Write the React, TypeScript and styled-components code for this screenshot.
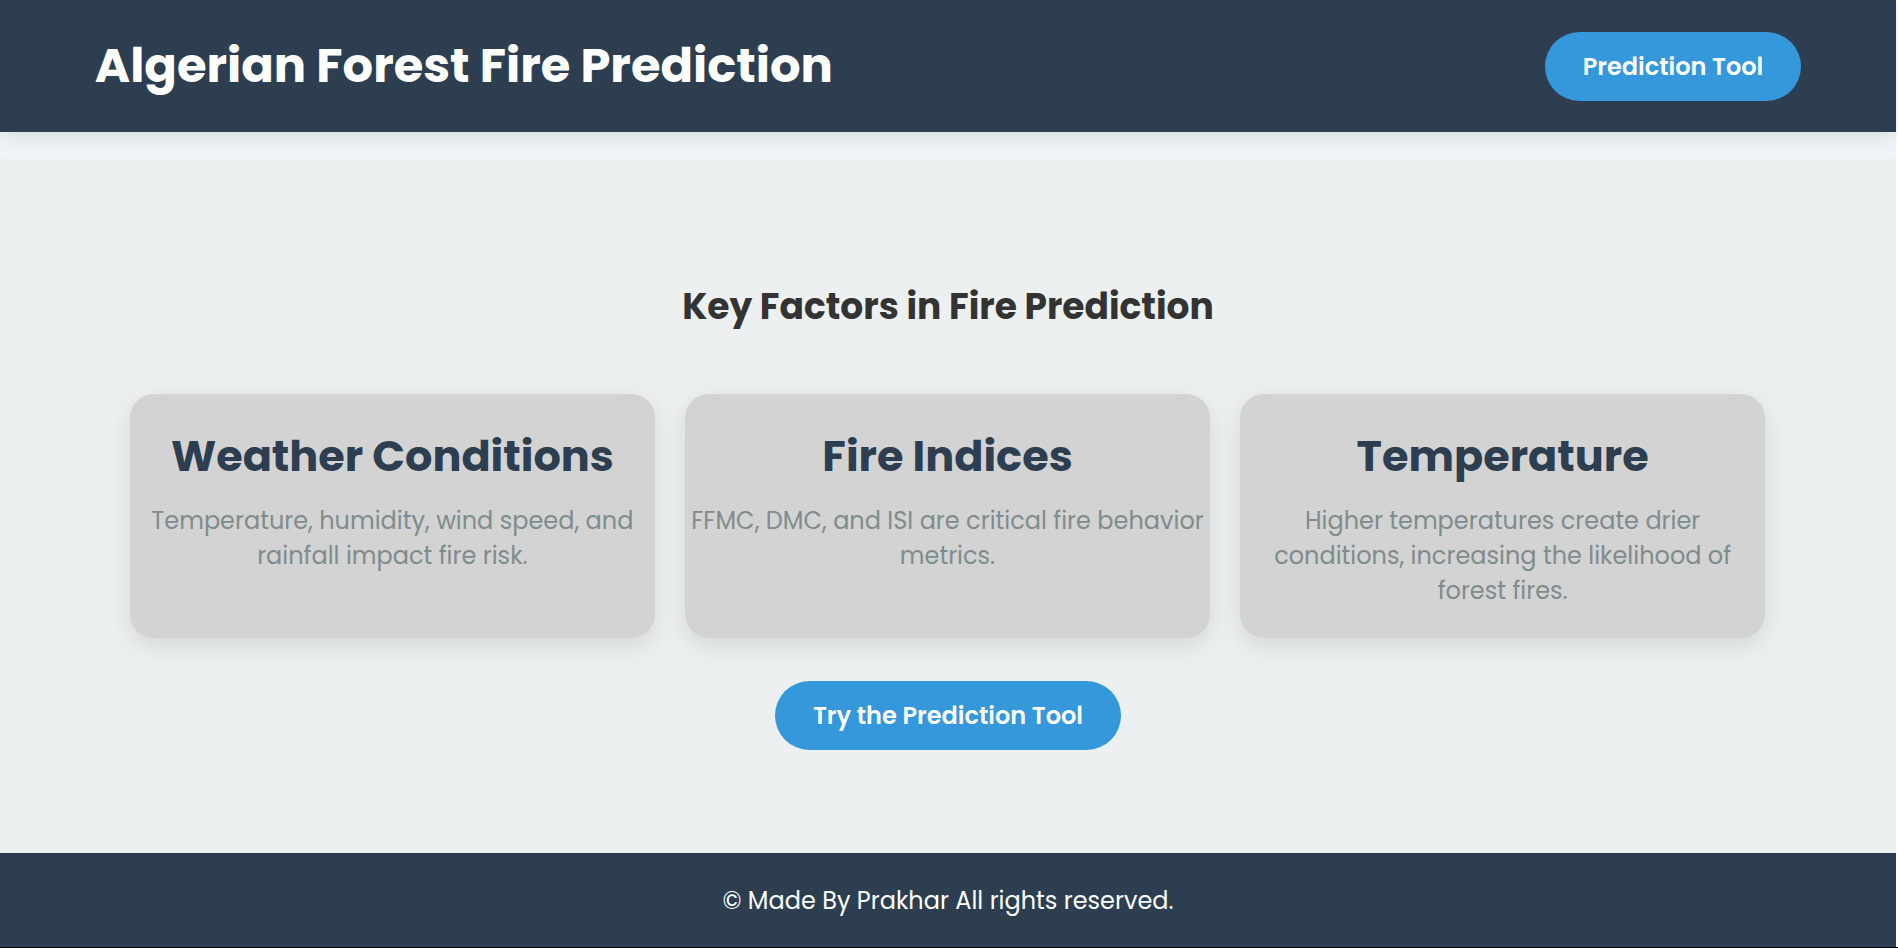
import React from "react";
import styled, { createGlobalStyle } from "styled-components";

const GlobalStyle = createGlobalStyle`
  *, *::before, *::after {
    box-sizing: border-box;
    margin: 0;
    padding: 0;
  }
  body {
    font-family: Poppins, Inter, "Liberation Sans", sans-serif;
    font-size: 24px;
    line-height: 35px;
    color: #333;
    background: #f0f4f8;
  }
`;

const Page = styled.div`
  min-height: 100vh;
  display: flex;
  flex-direction: column;
  border-bottom: 1px solid #000;
`;

const Content = styled.div`
  flex: 1;
  display: flex;
  flex-direction: column;
  border-right: 2px solid #fff;
`;

const Header = styled.header`
  display: flex;
  justify-content: space-between;
  align-items: center;
  padding: 32px 5% 31px;
  background: #2c3e50;
  box-shadow: 0 4px 20px rgba(0, 0, 0, 0.1);
`;

const SiteTitle = styled.h1`
  padding-bottom: 2px;
  font-size: 48px;
  line-height: 64px;
  font-weight: 700;
  color: #fff;
`;

const ButtonLink = styled.a`
  display: inline-block;
  padding: 17px 38px;
  border-radius: 50px;
  background: #3498db;
  color: #fff;
  font-weight: 600;
  text-decoration: none;
`;

const Factors = styled.main`
  flex: 1;
  display: flex;
  flex-direction: column;
  align-items: center;
  margin-top: 27px;
  padding: 121px 5% 100px;
  background: #ecf0f1;
`;

const SectionTitle = styled.h2`
  font-size: 36px;
  line-height: 54px;
  font-weight: 700;
  text-align: center;
`;

const CardGrid = styled.div`
  align-self: stretch;
  display: grid;
  grid-template-columns: repeat(3, 1fr);
  gap: 30px;
  margin: 60px 36px 43px 35px;
`;

const Card = styled.article`
  padding: 30px 6px;
  border-radius: 24px;
  background: #d3d3d3;
  box-shadow: 0 8px 24px rgba(0, 0, 0, 0.1);
  text-align: center;
`;

const CardTitle = styled.h3`
  margin-bottom: 15px;
  font-size: 43px;
  line-height: 64px;
  font-weight: 700;
  color: #2c3e50;
`;

const CardText = styled.p`
  color: #7f8c8d;
`;

const Footer = styled.footer`
  padding: 30px 5% 29px;
  background: #2c3e50;
  color: #fff;
  text-align: center;
`;

const factors = [
  {
    title: "Weather Conditions",
    text: "Temperature, humidity, wind speed, and rainfall impact fire risk.",
  },
  {
    title: "Fire Indices",
    text: "FFMC, DMC, and ISI are critical fire behavior metrics.",
  },
  {
    title: "Temperature",
    text: "Higher temperatures create drier conditions, increasing the likelihood of forest fires.",
  },
];

export default function App() {
  return (
    <>
      <GlobalStyle />
      <Page>
        <Content>
          <Header>
            <SiteTitle>Algerian Forest Fire Prediction</SiteTitle>
            <ButtonLink href="#predict">Prediction Tool</ButtonLink>
          </Header>
          <Factors>
            <SectionTitle>Key Factors in Fire Prediction</SectionTitle>
            <CardGrid>
              {factors.map((factor) => (
                <Card key={factor.title}>
                  <CardTitle>{factor.title}</CardTitle>
                  <CardText>{factor.text}</CardText>
                </Card>
              ))}
            </CardGrid>
            <ButtonLink href="#predict">Try the Prediction Tool</ButtonLink>
          </Factors>
          <Footer>
            <p>© Made By Prakhar All rights reserved.</p>
          </Footer>
        </Content>
      </Page>
    </>
  );
}
